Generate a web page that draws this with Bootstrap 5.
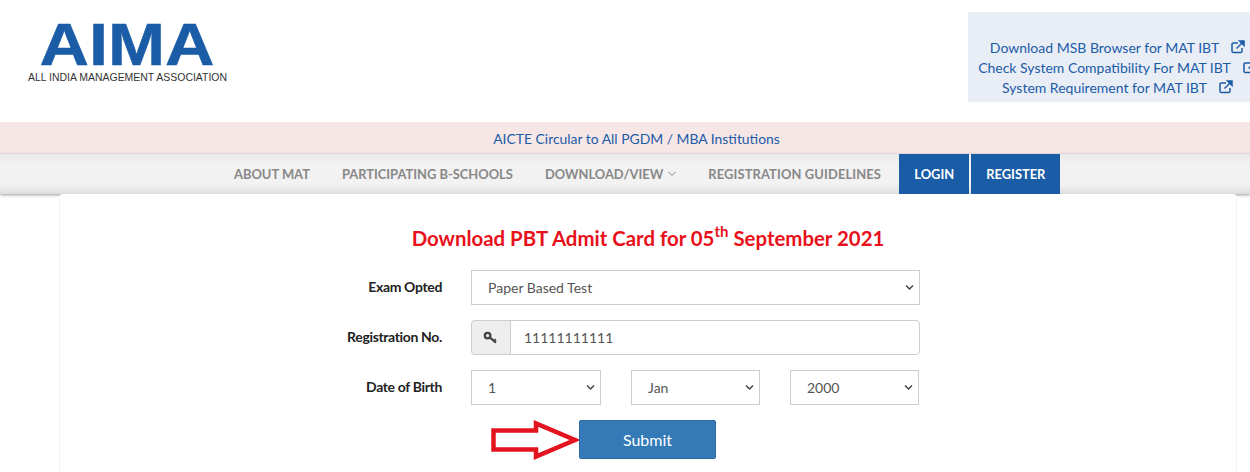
<!DOCTYPE html>
<html lang="en"><head><meta charset="utf-8"><title>AIMA</title>
<link href="https://cdn.jsdelivr.net/npm/bootstrap@5.3.0/dist/css/bootstrap.min.css" rel="stylesheet">
<style>
html,body{overflow:hidden;height:472px}
body{font-family:Lato,"Liberation Sans",sans-serif;font-size:14px;color:#555;background:#fff}
a{text-decoration:none}
.top-head{height:122px}
.logo-wrap{padding:8px 0 0 27px}
.logo-svg{display:block;width:202px;height:82px}
.logo-big{font-family:"Liberation Sans",sans-serif;font-weight:700;font-size:60px;fill:#1a5ca6;stroke:#1a5ca6;stroke-width:.5}
.logo-small{font-family:"Liberation Sans",sans-serif;font-size:10.6px;fill:#333}
.link-box{margin:12px -17px 0 0;width:299px;height:90px;background:#e9edf6;padding-top:26px;text-align:center;font-size:14px;line-height:20px}
.link-box a{color:#1a5ca6}
.ext{width:14px;height:14px;margin-left:12px;vertical-align:-1px;fill:none;stroke:#1a5ca6}
.notice{height:32px;background:#f7e6e6;line-height:34px;text-align:center;font-size:13.9px;padding-left:23px}
.notice a{color:#1a5ca6}
.mainnav{height:40px;background:linear-gradient(#e9e9e9,#f2f2f2 25%,#f2f2f2 75%,#dedede);padding-left:218px;box-shadow:0 1px 3px rgba(0,0,0,.4)}
.mainnav a{display:block;height:40px;line-height:40px;padding:0 16px;font-weight:700;font-size:12.9px;text-transform:uppercase;color:#888;white-space:nowrap}
.mainnav a.guide{letter-spacing:.13px}
.mainnav a.act{background:#1a5ca6;color:#fff;padding:0 15px;margin-right:2px}
.mainnav a.first-act{margin-left:2.300px}
.chev{width:8px;height:6px;margin-left:5px;vertical-align:2px;fill:none;stroke:#888}
.panel{position:relative;background:#fff;width:1178px;margin:0 0 0 59px;height:280px;border-left:1px solid #f4f4f4;border-right:1px solid #f4f4f4;border-radius:4px 4px 0 0;padding-top:28px}
.ttl{font-size:20.4px;font-weight:700;color:#e8101a;text-align:center;line-height:32px;margin:0 0 16px}
.ttl sup{font-size:15px;top:-.62em;line-height:0}
.frow{height:35px;margin-bottom:15px}
.flab{width:382px;text-align:right;font-weight:700;color:#222;font-size:14px;letter-spacing:-.35px;line-height:34px;margin:0 29px 0 0;flex:none}
.ctl.form-select,.ctl.form-control{height:35px;border-radius:0;border:1px solid #ccc;color:#555;font-size:14px;padding:0 16px;line-height:33px;box-shadow:none}
.ctl.form-select{background-image:url("data:image/svg+xml,%3csvg xmlns='http://www.w3.org/2000/svg' viewBox='0 0 9 7'%3e%3cpath fill='none' stroke='%23444' stroke-width='1.500' d='M1 1.500l3.500 3.500L8 1.500'/%3e%3c/svg%3e");background-size:9px 7px;background-position:right 5px center}
.w449{width:449px;flex:none}
.dob1{width:130px;flex:none}.dob2{width:129px;margin-left:30px;flex:none}.dob3{width:129px;margin-left:30px;flex:none}
.igrp{width:449px;flex:none;flex-wrap:nowrap}
.igrp .input-group-text{width:40px;height:35px;padding:0;justify-content:center;background:#eee;border:1px solid #ccc;border-radius:4px 0 0 4px}
.igrp .ctl.form-control{border-radius:0 4px 4px 0;padding-left:13px}
.subm-row{position:relative;height:39px}
.subm{position:absolute;left:519px;top:0;width:137px;height:39px;background:#337ab7;border:1px solid #2e6da4;border-radius:2px;color:#fff;font-size:16px;padding:0}
.arrow{position:absolute;left:430px;top:-2px;width:92px;height:44px}
</style></head>
<body>
<header class="top-head d-flex justify-content-between">
  <div class="logo-wrap">
    <svg class="logo-svg" viewBox="0 0 202 82" role="img" aria-label="AIMA">
      <text class="logo-big" x="12.500" y="57" textLength="175" lengthAdjust="spacingAndGlyphs">AIMA</text>
      <text class="logo-small" x="1" y="73" textLength="199" lengthAdjust="spacingAndGlyphs">ALL INDIA MANAGEMENT ASSOCIATION</text>
    </svg>
  </div>
  <div class="link-box">
    <div><a href="#">Download MSB Browser for MAT IBT<svg class="ext" viewBox="0 0 14 14" stroke-width="1.5"><path d="M11 8v3.2a1.3 1.3 0 0 1-1.3 1.3H2.3A1.3 1.3 0 0 1 1 11.2V4.3A1.3 1.3 0 0 1 2.3 3H7"/><path d="M5.500 8.500 12 2"/><path d="M8.600 1h4.400v4.400z" fill="#1a5ca6"/></svg></a></div>
    <div><a href="#">Check System Compatibility For MAT IBT<svg class="ext" viewBox="0 0 14 14" stroke-width="1.5"><path d="M11 8v3.2a1.3 1.3 0 0 1-1.3 1.3H2.3A1.3 1.3 0 0 1 1 11.2V4.3A1.3 1.3 0 0 1 2.3 3H7"/><path d="M5.500 8.500 12 2"/><path d="M8.600 1h4.400v4.400z" fill="#1a5ca6"/></svg></a></div>
    <div><a href="#">System Requirement for MAT IBT<svg class="ext" viewBox="0 0 14 14" stroke-width="1.5"><path d="M11 8v3.2a1.3 1.3 0 0 1-1.3 1.3H2.3A1.3 1.3 0 0 1 1 11.2V4.3A1.3 1.3 0 0 1 2.3 3H7"/><path d="M5.500 8.500 12 2"/><path d="M8.600 1h4.400v4.400z" fill="#1a5ca6"/></svg></a></div>
  </div>
</header>
<div class="notice"><a href="#">AICTE Circular to All PGDM / MBA Institutions</a></div>
<nav class="mainnav d-flex">
  <a href="#">About MAT</a>
  <a href="#">Participating B-Schools</a>
  <a href="#">Download/View<svg class="chev" viewBox="0 0 8 6"><path d="M.5 1l3.500 3.500L7.500 1"/></svg></a>
  <a href="#" class="guide">Registration Guidelines</a>
  <a href="#" class="act first-act">Login</a>
  <a href="#" class="act">Register</a>
</nav>
<main class="panel">
  <h1 class="ttl">Download PBT Admit Card for 05<sup>th</sup> September 2021</h1>
  <form>
    <div class="frow d-flex">
      <label class="flab" for="ex">Exam Opted</label>
      <select id="ex" class="form-select ctl w449"><option>Paper Based Test</option></select>
    </div>
    <div class="frow d-flex">
      <label class="flab" for="rg">Registration No.</label>
      <div class="input-group igrp">
        <span class="input-group-text"><svg width="16" height="14" viewBox="0 0 16 14" fill="none" stroke="#444"><circle cx="4.600" cy="4.600" r="2.800" stroke-width="2.300"/><path d="M7 6.600l6 5" stroke-width="2.300"/><path d="M11 10l1.800-1.800" stroke-width="1.800"/></svg></span>
        <input id="rg" class="form-control ctl" value="11111111111">
      </div>
    </div>
    <div class="frow d-flex">
      <label class="flab" for="dd">Date of Birth</label>
      <select id="dd" class="form-select ctl dob1"><option>1</option></select>
      <select class="form-select ctl dob2" aria-label="Month"><option>Jan</option></select>
      <select class="form-select ctl dob3" aria-label="Year"><option>2000</option></select>
    </div>
    <div class="subm-row">
      <svg class="arrow" viewBox="0 0 92 44"><path d="M3.500 12.500H46V5.500L85 22 46 38.500V31.500H3.500Z" fill="#fff" stroke="#e3141f" stroke-width="4.500" stroke-linejoin="miter"/></svg>
      <button type="button" class="btn subm">Submit</button>
    </div>
  </form>
</main>
<script src="https://cdn.jsdelivr.net/npm/bootstrap@5.3.0/dist/js/bootstrap.bundle.min.js"></script>
</body></html>
